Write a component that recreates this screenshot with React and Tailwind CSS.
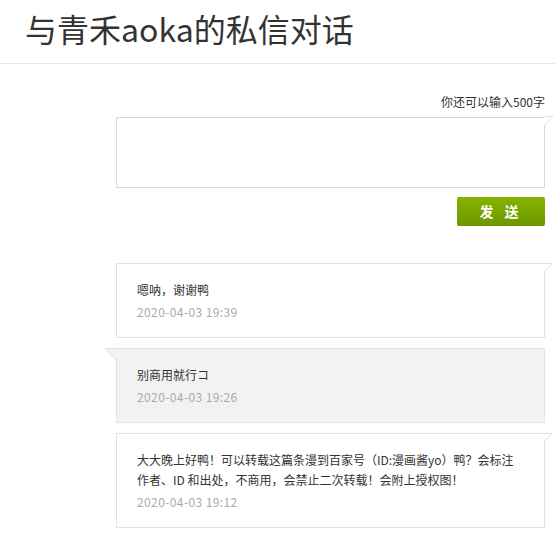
import React from 'react';

const font = { fontFamily: '"Noto Sans CJK SC", "Microsoft YaHei", sans-serif' };

const messages = [
  { id: 1, side: 'right', text: ['嗯呐，谢谢鸭'], time: '2020-04-03 19:39' },
  { id: 2, side: 'left', text: ['别商用就行コ'], time: '2020-04-03 19:26' },
  {
    id: 3,
    side: 'right',
    text: [
      '大大晚上好鸭！可以转载这篇条漫到百家号（ID:漫画酱yo）鸭？会标注',
      '作者、ID 和出处，不商用，会禁止二次转载！会附上授权图！',
    ],
    time: '2020-04-03 19:12',
  },
];

const TailRight = ({ fill = '#fff' }) => (
  <svg className="absolute -right-[9px] -top-px" width="10" height="11" viewBox="0 0 10 11">
    <path d="M0 0.5 L9 0.5 L0 9.5 Z" fill={fill} />
    <path d="M0 0.5 L9 0.5 L0.5 9" fill="none" stroke="#e0e0e0" strokeWidth="1" />
  </svg>
);

const TailLeft = ({ fill = '#f2f2f2' }) => (
  <svg className="absolute -left-[13px] -top-px" width="14" height="14" viewBox="0 0 14 14">
    <path d="M13 0.5 L0.5 0.5 L13 13 Z" fill={fill} />
    <path d="M13 0.5 L0.5 0.5 L13 13" fill="none" stroke="#e0e0e0" strokeWidth="1" />
  </svg>
);

function MessageCard({ msg }) {
  const left = msg.side === 'left';
  return (
    <div
      className={`relative border border-[#e3e3e3] px-[20px] pt-[16px] pb-[15px] ${
        left ? 'bg-[#f2f2f2]' : 'bg-white'
      }`}
    >
      {left ? <TailLeft /> : <TailRight />}
      <div className="text-[12px] leading-[20px] text-[#333]">
        {msg.text.map((line, i) => (
          <div key={i} className="whitespace-nowrap">{line}</div>
        ))}
      </div>
      <div className="mt-[2px] text-[12px] leading-[20px] tracking-[0.4px] text-[#aaa]">{msg.time}</div>
    </div>
  );
}

export default function App() {
  return (
    <div className="min-h-[542px] w-[555px] bg-white" style={font}>
      <div className="h-[64px] border-b border-[#e5e5e5] px-[25px] pt-[10px]">
        <h1 className="text-[32px] leading-[36px] font-normal text-[#333]">与青禾aoka的私信对话</h1>
      </div>

      <div className="ml-[116px] mr-[10px]">
        <div className="mt-[28px] text-right text-[12px] leading-[20px] text-[#333]">你还可以输入500字</div>
        <div className="relative mt-[5px]">
          <TailRight />
          <textarea className="block h-[71px] w-full resize-none border border-[#d9d9d9] bg-white outline-none" />
        </div>
        <div className="mt-[9px] flex justify-end">
          <button
            type="button"
            className="h-[29px] w-[88px] rounded-[2px] bg-gradient-to-b from-[#86b300] to-[#6c9800] text-[14px] font-bold tracking-[4px] text-white"
          >
            发 送
          </button>
        </div>

        <div className="mt-[37px] flex flex-col gap-[10px] pb-[10px]">
          {messages.map((m) => (
            <MessageCard key={m.id} msg={m} />
          ))}
        </div>
      </div>
    </div>
  );
}
